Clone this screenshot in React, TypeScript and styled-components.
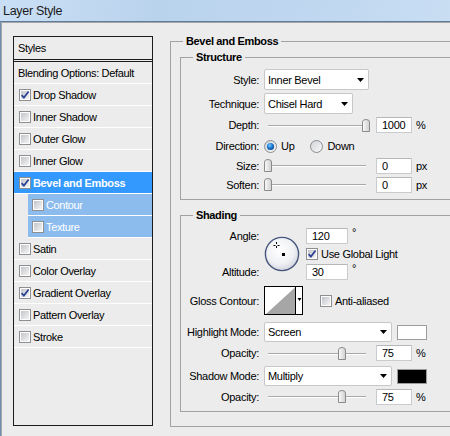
import React, { useId } from "react";
import styled, { createGlobalStyle } from "styled-components";

const Global = createGlobalStyle`
  html, body { margin: 0; padding: 0; background: #ececec; }
  body {
    font-family: "Liberation Sans", Arial, sans-serif;
    font-size: 11px;
    color: #000;
  }
  #root { width: 450px; height: 436px; }
`;

const Window = styled.div`
  width: 450px;
  height: 436px;
  overflow: hidden;
  display: flex;
  flex-direction: column;
  background: #ececec;
`;

const TitleBar = styled.div`
  height: 21px;
  flex: none;
  display: flex;
  align-items: center;
  padding-left: 3px;
  background: linear-gradient(100deg, #c9dff5 0%, #bad3ec 35%, #c0d8f0 75%, #c9def3 100%);
  border-bottom: 1px solid #5f7b9c;
  font-family: "Liberation Sans", Arial, sans-serif;
  font-size: 12.5px;
  letter-spacing: -0.3px;
  color: #1a1a1a;
`;

const Body = styled.div`
  flex: 1;
  display: flex;
  align-items: flex-start;
  gap: 17px;
  padding-left: 12px;
  border-top: 1px solid #a6a6a6;
  border-left: 1px solid #6f90b6;
  box-shadow: inset 1px 0 0 #a6a6a6;
`;

/* ---------- Left styles list ---------- */

const StylesPanel = styled.div`
  flex: none;
  margin-top: 13px;
  width: 140px;
  height: 390px;
  box-sizing: border-box;
  border: 1px solid #1c1c1c;
  display: flex;
  flex-direction: column;
  letter-spacing: -0.35px;
`;

const PanelHeader = styled.div`
  height: 22px;
  flex: none;
  display: flex;
  align-items: center;
  padding-left: 4px;
  border-bottom: 3px double #1c1c1c;
`;

const PanelRow = styled.div<{ $sel?: boolean; $sub?: boolean; $plain?: boolean }>`
  height: 21px;
  flex: none;
  display: flex;
  align-items: center;
  gap: 2px;
  border-bottom: 1px solid #ffffff;
  margin-left: ${(p) => (p.$sub ? 14 : 0)}px;
  padding-left: ${(p) => (p.$plain ? 4 : p.$sub ? 4 : 5)}px;
  background: ${(p) => (p.$sel ? "#3399ff" : p.$sub ? "#8cbcee" : "transparent")};
  color: ${(p) => (p.$sel || p.$sub ? "#ffffff" : "#000")};
  font-weight: ${(p) => (p.$sel ? "bold" : "normal")};
  white-space: nowrap;
`;

/* ---------- Right form ---------- */

const Group = styled.fieldset<{ $ml?: number; $mt?: number; $w?: number }>`
  margin: ${(p) => p.$mt ?? 0}px 0 0 ${(p) => p.$ml ?? 0}px;
  padding: 0;
  min-width: 0;
  width: ${(p) => p.$w ?? 280}px;
  box-sizing: border-box;
  flex: none;
  border: 1px solid #a2a2a2;
`;

const Legend = styled.legend`
  margin-left: 12px;
  padding: 0 3px;
  height: 13px;
  line-height: 13px;
  font-weight: bold;
  letter-spacing: -0.35px;
`;

const GroupInner = styled.div<{ $pt?: number; $pb?: number; $pl?: number }>`
  display: flex;
  flex-direction: column;
  padding: ${(p) => p.$pt ?? 0}px 0 ${(p) => p.$pb ?? 0}px ${(p) => p.$pl ?? 0}px;
  letter-spacing: -0.3px;
`;

const FormRow = styled.div<{ $h: number; $mt?: number }>`
  display: grid;
  grid-template-columns: 78px auto;
  column-gap: 5px;
  align-items: center;
  height: ${(p) => p.$h}px;
  margin-top: ${(p) => p.$mt ?? 0}px;
`;

const Label = styled.div`
  text-align: right;
  white-space: nowrap;
`;

const Controls = styled.div<{ $gap?: number }>`
  display: flex;
  align-items: center;
  gap: ${(p) => p.$gap ?? 0}px;
  white-space: nowrap;
`;

const SelectBox = styled.div<{ $w: number; $h?: number }>`
  width: ${(p) => p.$w}px;
  height: ${(p) => p.$h ?? 21}px;
  box-sizing: border-box;
  background: #fff;
  border: 1px solid #c7c7c7;
  border-radius: 2px;
  display: flex;
  align-items: center;
  justify-content: space-between;
  padding: 0 4px 0 3px;
`;

const NumField = styled.div<{ $w: number }>`
  width: ${(p) => p.$w}px;
  height: 16px;
  box-sizing: border-box;
  background: #fff;
  border: 1px solid #c9cbcf;
  border-top-color: #b5b7bb;
  border-radius: 1px;
  display: flex;
  align-items: center;
  padding-left: 5px;
`;

const Unit = styled.span`
  margin-left: 4px;
`;

const Degree = styled.span`
  margin-left: 4px;
  align-self: flex-start;
  margin-top: -2px;
`;

const SliderBox = styled.div`
  width: 106px;
  height: 13px;
  flex: none;
  display: flex;
  align-items: flex-start;
  margin-right: 6px;
  background:
    linear-gradient(#a9a9a9, #a9a9a9) 4px 6px / calc(100% - 8px) 1px no-repeat,
    linear-gradient(#ffffff, #ffffff) 4px 7px / calc(100% - 8px) 1px no-repeat;
`;

const RadioItem = styled.label`
  display: flex;
  align-items: center;
  gap: 4px;
`;

const RadioGroup = styled.div`
  display: flex;
  align-items: center;
  gap: 16px;
`;

const CheckItem = styled.label<{ $gap?: number }>`
  display: flex;
  align-items: center;
  gap: ${(p) => p.$gap ?? 3}px;
  white-space: nowrap;
`;

const AngleGrid = styled.div`
  display: grid;
  grid-template-columns: 78px 37px auto;
  grid-template-rows: 17px 19px 17px;
  column-gap: 5px;
  align-items: center;
  margin-top: 5px;
`;

const DialCell = styled.div`
  grid-column: 2;
  grid-row: 1 / 4;
  display: flex;
  align-items: center;
`;

const Swatch = styled.div<{ $c: string }>`
  width: 30px;
  height: 15px;
  box-sizing: border-box;
  margin-left: 5px;
  background: ${(p) => p.$c};
  border: 1px solid #9c9c9c;
`;

const AntiAlias = styled(CheckItem)`
  margin-left: 17px;
`;

/* ---------- Drawn widgets ---------- */

const Arrow = () => (
  <svg width="7" height="4" viewBox="0 0 7 4">
    <polygon points="0,0 7,0 3.5,4" fill="#000" />
  </svg>
);

const CheckBox = ({ checked }: { checked?: boolean }) => {
  const id = useId().replace(/:/g, "");
  return (
    <svg width="12" height="12" viewBox="0 0 12 12" style={{ flex: "none" }}>
      <defs>
        <linearGradient id={`cb${id}`} x1="0" y1="0" x2="1" y2="1">
          <stop offset="0" stopColor="#c2c5ca" />
          <stop offset="1" stopColor="#f4f4f4" />
        </linearGradient>
      </defs>
      <rect x="0.5" y="0.5" width="11" height="11" fill="#fdfdfd" stroke="#8d8f91" />
      <rect x="2" y="2" width="8" height="8" fill={`url(#cb${id})`} />
      {checked && (
        <path d="M2.6 6.1 L4.9 8.6 L9.6 2.6" fill="none" stroke="#2b3f94" strokeWidth="1.7" />
      )}
    </svg>
  );
};

const Radio = ({ on }: { on?: boolean }) => {
  const id = useId().replace(/:/g, "");
  return (
    <svg width="13" height="13" viewBox="0 0 13 13" style={{ flex: "none" }}>
      <defs>
        <linearGradient id={`rg${id}`} x1="0" y1="0" x2="1" y2="1">
          <stop offset="0" stopColor="#cfd1d4" />
          <stop offset="1" stopColor="#fbfbfb" />
        </linearGradient>
        <radialGradient id={`rd${id}`} cx="40%" cy="35%" r="70%">
          <stop offset="0" stopColor="#7cc8ff" />
          <stop offset="0.5" stopColor="#1e80d6" />
          <stop offset="1" stopColor="#0b3f86" />
        </radialGradient>
      </defs>
      <circle cx="6.5" cy="6.5" r="6" fill={`url(#rg${id})`} stroke="#8a8c8f" />
      {on && <circle cx="6.5" cy="6.5" r="3.6" fill={`url(#rd${id})`} />}
    </svg>
  );
};

const Thumb = () => {
  const id = useId().replace(/:/g, "");
  return (
    <svg width="8" height="13" viewBox="0 0 8 13" style={{ flex: "none" }}>
      <defs>
        <linearGradient id={`th${id}`} x1="0" y1="0" x2="1" y2="0">
          <stop offset="0" stopColor="#fbfbfb" />
          <stop offset="1" stopColor="#cfcfcf" />
        </linearGradient>
      </defs>
      <path
        d="M0.5 12.5 V3 Q0.5 0.5 4 0.5 Q7.5 0.5 7.5 3 V12.5 Z"
        fill={`url(#th${id})`}
        stroke="#8b8b8b"
      />
    </svg>
  );
};

const Slider = ({ value, max }: { value: number; max: number }) => (
  <SliderBox>
    <span style={{ width: `${(value / max) * 98}px`, flex: "none" }} />
    <Thumb />
  </SliderBox>
);

const AngleDial = () => {
  const id = useId().replace(/:/g, "");
  return (
    <svg width="36" height="36" viewBox="0 0 36 36">
      <defs>
        <radialGradient id={`dg${id}`} cx="45%" cy="40%" r="62%">
          <stop offset="0" stopColor="#ffffff" />
          <stop offset="0.65" stopColor="#f0f1f4" />
          <stop offset="1" stopColor="#cfd3dc" />
        </radialGradient>
      </defs>
      <circle cx="18" cy="18" r="16.6" fill={`url(#dg${id})`} stroke="#47567d" strokeWidth="1.4" />
      <path d="M12.5 6 V8 M12.5 10 V12 M9.5 9.5 H11.5 M13.5 9.5 H15.5" stroke="#000" strokeWidth="1" />
      <rect x="18" y="17" width="3" height="3" fill="#000" />
    </svg>
  );
};

const GlossContour = () => (
  <svg width="39" height="29" viewBox="0 0 39 29">
    <rect x="0.5" y="0.5" width="38" height="28" fill="#fff" stroke="#000" />
    <polygon points="2,28 31,1.5 31,28" fill="#a6a6a6" />
    <line x1="31.5" y1="0" x2="31.5" y2="29" stroke="#000" />
    <polygon points="33.5,12 37.5,12 35.5,15" fill="#000" />
  </svg>
);

/* ---------- Data ---------- */

type Item = { label: string; checked?: boolean; sel?: boolean; sub?: boolean };

const items: Item[] = [
  { label: "Drop Shadow", checked: true },
  { label: "Inner Shadow" },
  { label: "Outer Glow" },
  { label: "Inner Glow" },
  { label: "Bevel and Emboss", checked: true, sel: true },
  { label: "Contour", sub: true },
  { label: "Texture", sub: true },
  { label: "Satin" },
  { label: "Color Overlay" },
  { label: "Gradient Overlay", checked: true },
  { label: "Pattern Overlay" },
  { label: "Stroke" },
];

export default function App() {
  return (
    <>
      <Global />
      <Window>
        <TitleBar>Layer Style</TitleBar>
        <Body>
          <StylesPanel>
            <PanelHeader>Styles</PanelHeader>
            <PanelRow $plain>Blending Options: Default</PanelRow>
            {items.map((it) => (
              <PanelRow key={it.label} $sel={it.sel} $sub={it.sub}>
                <CheckBox checked={it.checked} />
                <span>{it.label}</span>
              </PanelRow>
            ))}
          </StylesPanel>

          <Group $mt={12} $w={292}>
            <Legend>Bevel and Emboss</Legend>
            <GroupInner $pl={9} $pb={14}>
              <Group $mt={3} $w={274}>
                <Legend>Structure</Legend>
                <GroupInner $pt={5} $pb={5}>
                  <FormRow $h={21}>
                    <Label>Style:</Label>
                    <Controls>
                      <SelectBox $w={105}>
                        <span>Inner Bevel</span>
                        <Arrow />
                      </SelectBox>
                    </Controls>
                  </FormRow>
                  <FormRow $h={21} $mt={3}>
                    <Label>Technique:</Label>
                    <Controls>
                      <SelectBox $w={89}>
                        <span>Chisel Hard</span>
                        <Arrow />
                      </SelectBox>
                    </Controls>
                  </FormRow>
                  <FormRow $h={22}>
                    <Label>Depth:</Label>
                    <Controls>
                      <Slider value={1000} max={1000} />
                      <NumField $w={36}>1000</NumField>
                      <Unit>%</Unit>
                    </Controls>
                  </FormRow>
                  <FormRow $h={20}>
                    <Label>Direction:</Label>
                    <RadioGroup>
                      <RadioItem>
                        <Radio on />
                        <span>Up</span>
                      </RadioItem>
                      <RadioItem>
                        <Radio />
                        <span>Down</span>
                      </RadioItem>
                    </RadioGroup>
                  </FormRow>
                  <FormRow $h={19}>
                    <Label>Size:</Label>
                    <Controls>
                      <Slider value={0} max={250} />
                      <NumField $w={36}>0</NumField>
                      <Unit>px</Unit>
                    </Controls>
                  </FormRow>
                  <FormRow $h={19}>
                    <Label>Soften:</Label>
                    <Controls>
                      <Slider value={0} max={16} />
                      <NumField $w={36}>0</NumField>
                      <Unit>px</Unit>
                    </Controls>
                  </FormRow>
                </GroupInner>
              </Group>

              <Group $mt={9} $w={274}>
                <Legend>Shading</Legend>
                <GroupInner $pb={6}>
                  <AngleGrid>
                    <Label style={{ gridColumn: 1, gridRow: 1 }}>Angle:</Label>
                    <Label style={{ gridColumn: 1, gridRow: 3 }}>Altitude:</Label>
                    <DialCell>
                      <AngleDial />
                    </DialCell>
                    <Controls style={{ gridColumn: 3, gridRow: 1 }}>
                      <NumField $w={42}>120</NumField>
                      <Degree>°</Degree>
                    </Controls>
                    <Controls style={{ gridColumn: 3, gridRow: 2 }}>
                      <CheckItem>
                        <CheckBox checked />
                        <span>Use Global Light</span>
                      </CheckItem>
                    </Controls>
                    <Controls style={{ gridColumn: 3, gridRow: 3 }}>
                      <NumField $w={42}>30</NumField>
                      <Degree>°</Degree>
                    </Controls>
                  </AngleGrid>
                  <FormRow $h={29} $mt={6}>
                    <Label>Gloss Contour:</Label>
                    <Controls>
                      <GlossContour />
                      <AntiAlias>
                        <CheckBox />
                        <span>Anti-aliased</span>
                      </AntiAlias>
                    </Controls>
                  </FormRow>
                  <FormRow $h={20} $mt={7}>
                    <Label>Highlight Mode:</Label>
                    <Controls>
                      <SelectBox $w={128} $h={20}>
                        <span>Screen</span>
                        <Arrow />
                      </SelectBox>
                      <Swatch $c="#ffffff" />
                    </Controls>
                  </FormRow>
                  <FormRow $h={22}>
                    <Label>Opacity:</Label>
                    <Controls>
                      <Slider value={75} max={100} />
                      <NumField $w={36}>75</NumField>
                      <Unit>%</Unit>
                    </Controls>
                  </FormRow>
                  <FormRow $h={24}>
                    <Label>Shadow Mode:</Label>
                    <Controls>
                      <SelectBox $w={128} $h={20}>
                        <span>Multiply</span>
                        <Arrow />
                      </SelectBox>
                      <Swatch $c="#000000" />
                    </Controls>
                  </FormRow>
                  <FormRow $h={17}>
                    <Label>Opacity:</Label>
                    <Controls>
                      <Slider value={75} max={100} />
                      <NumField $w={36}>75</NumField>
                      <Unit>%</Unit>
                    </Controls>
                  </FormRow>
                </GroupInner>
              </Group>
            </GroupInner>
          </Group>
        </Body>
      </Window>
    </>
  );
}
